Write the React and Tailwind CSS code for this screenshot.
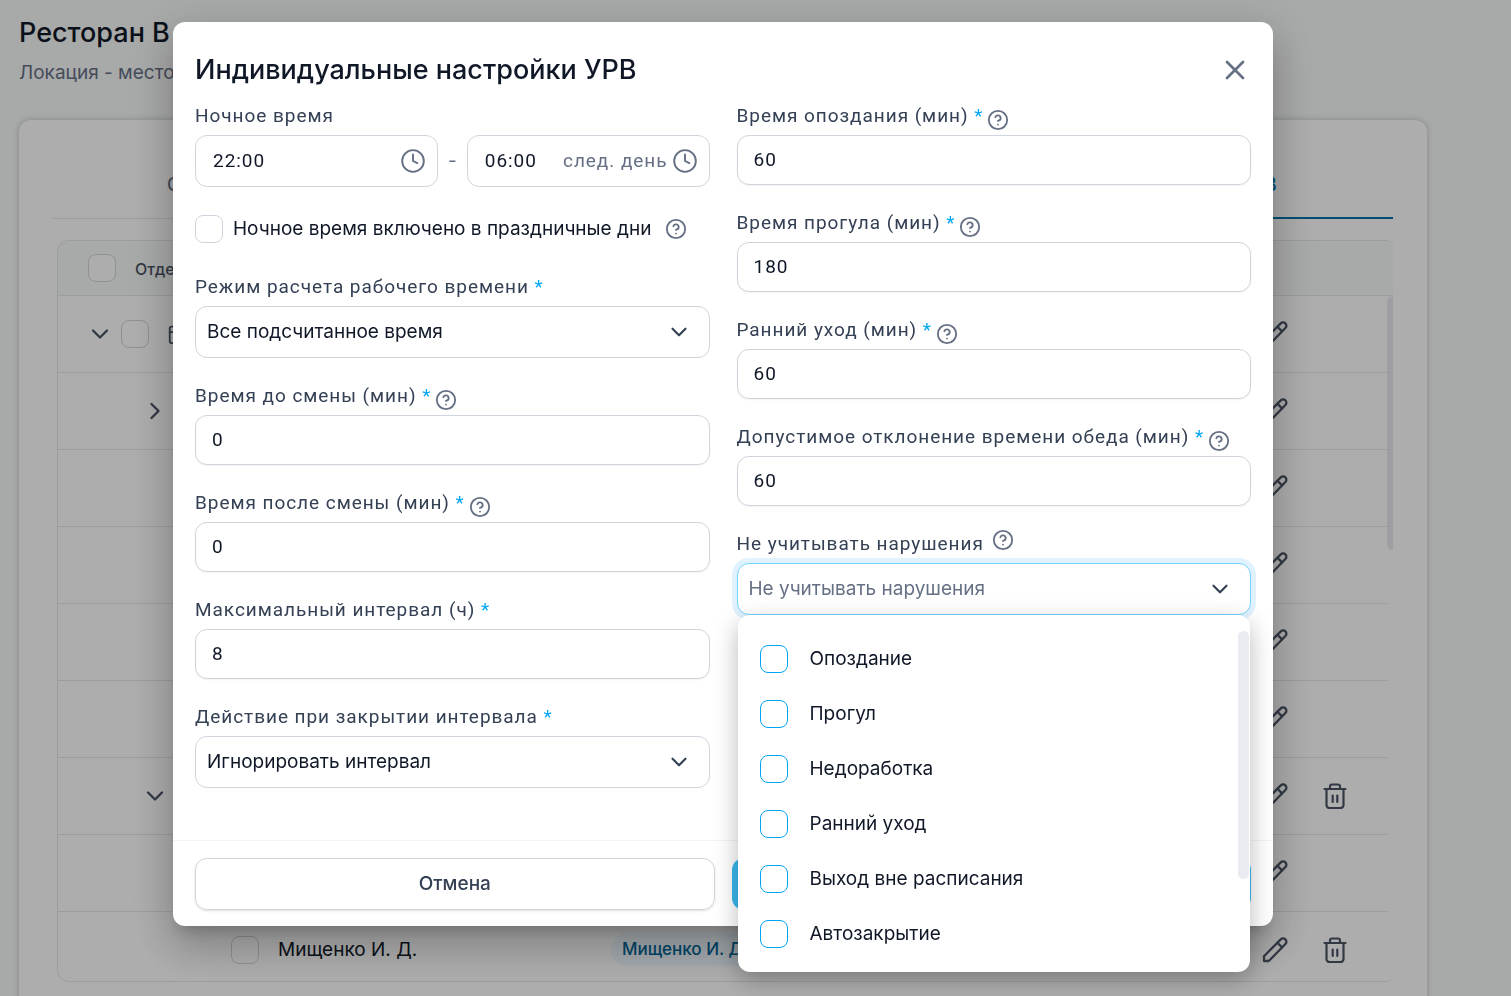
import React, { useState } from 'react';
import { ChevronDown, ChevronRight, CircleHelp, Clock, X, Calendar } from 'lucide-react';

const violations = ['Опоздание', 'Прогул', 'Недоработка', 'Ранний уход', 'Выход вне расписания', 'Автозакрытие'];

const rows = [
  { id: 1, toggle: 'root' },
  { id: 2, toggle: 'closed' },
  { id: 3 },
  { id: 4 },
  { id: 5 },
  { id: 6 },
  { id: 7, toggle: 'open', removable: true },
  { id: 8 },
  { id: 9, name: 'Мищенко И. Д.', removable: true },
];

const PencilIcon = () => (
  <svg width="26" height="26" viewBox="0 0 26 26" fill="none" stroke="currentColor" strokeWidth="2.3" strokeLinejoin="round" strokeLinecap="round">
    <path d="M2 24v-4.8L18.8 2.4a3.2 3.2 0 0 1 4.6 0a3.2 3.2 0 0 1 0 4.6L6.8 24Z" />
    <path d="m15.4 5.8 4.6 4.6" />
  </svg>
);

const TrashIcon = () => (
  <svg width="26" height="26" viewBox="0 0 26 26" fill="none" stroke="currentColor" strokeWidth="2.2" strokeLinejoin="round" strokeLinecap="round">
    <path d="M2.5 6h21" />
    <path d="M8 6V3.5A2 2 0 0 1 10 1.5h6a2 2 0 0 1 2 2V6" />
    <path d="M4.5 6v16a3 3 0 0 0 3 3h11a3 3 0 0 0 3-3V6" />
    <path d="M10.7 12.5v6.5M15.3 12.5v6.5" />
  </svg>
);

const Checkbox = ({ id, label, className = 'border-[#d0d5dd]' }) => (
  <input
    id={id}
    type="checkbox"
    aria-label={label}
    className={`size-7 shrink-0 appearance-none rounded-lg border bg-white checked:bg-sky-500 ${className}`}
  />
);

const Help = ({ className = '' }) => (
  <CircleHelp size={22} strokeWidth={2} className={`shrink-0 text-[#667085] ${className}`} />
);

const Label = ({ htmlFor, required, children, icon }) => (
  <div className="mb-1 flex h-[30px] items-center gap-1">
    <label htmlFor={htmlFor} className="font-[Roboto,sans-serif] text-[19px] tracking-wider text-[#344054]">
      {children}
      {required && <span className="text-sky-500"> *</span>}
    </label>
    {icon}
  </div>
);

const NumberField = ({ id, label, value, help }) => (
  <div>
    <Label htmlFor={id} required icon={help && <Help className="self-end" />}>{label}</Label>
    <input
      id={id}
      type="text"
      defaultValue={value}
      className="h-[50px] w-full rounded-xl border border-[#d0d5dd] bg-white px-4 pb-0.5 font-[Roboto,sans-serif] text-[19px] tracking-wider text-gray-900 shadow-xs outline-none"
    />
  </div>
);

const SelectBox = ({ id, value, className = 'border-[#d0d5dd] text-gray-900' }) => (
  <div className="relative">
    <select
      id={id}
      className={`h-[52px] w-full appearance-none rounded-xl border bg-white pr-12 pl-[11px] text-[19px] outline-none ${className}`}
    >
      <option>{value}</option>
    </select>
    <ChevronDown size={26} className="pointer-events-none absolute top-[13px] right-[18px] text-[#344054]" />
  </div>
);

const TimeField = ({ label, value, suffix }) => (
  <div className="flex h-[52px] min-w-0 flex-1 items-center rounded-xl border border-[#d0d5dd] pr-[11px] pl-[17px] font-[Roboto,sans-serif] text-[19px] tracking-wider">
    <input aria-label={label} type="text" defaultValue={value} className="w-0 min-w-0 flex-1 bg-transparent text-gray-900 outline-none" />
    {suffix && <span className="mr-1 whitespace-nowrap text-[#667085]">{suffix}</span>}
    <Clock size={26} strokeWidth={1.75} className="shrink-0 text-[#667085]" />
  </div>
);

const TreeCell = ({ row }) => {
  if (row.toggle === 'root') {
    return (
      <div className="flex items-center pl-7">
        <ChevronDown size={28} className="mr-[7px]" />
        <Checkbox label="Выбрать локацию" />
        <Calendar size={22} className="ml-[18px]" />
      </div>
    );
  }
  if (row.toggle) {
    const Chevron = row.toggle === 'open' ? ChevronDown : ChevronRight;
    return (
      <div className="pl-[83px]">
        <Chevron size={28} />
      </div>
    );
  }
  if (row.name) {
    return (
      <div className="flex items-center gap-[19px] pl-[173px]">
        <Checkbox label={row.name} />
        <span className="pt-0.5 text-[19px] text-gray-900">{row.name}</span>
      </div>
    );
  }
  return null;
};

const StaffTable = () => (
  <div className="relative ml-1 h-[calc(100vh-254px)] overflow-hidden rounded-l-xl rounded-r-md border border-r-0 border-gray-200">
    <table className="w-full table-fixed border-collapse text-left">
      <thead className="bg-[#f8faf9]">
        <tr className="h-[54px]">
          <th className="w-[553px] border-b border-gray-200 p-0">
            <div className="flex items-center gap-[19px] pl-[30px]">
              <Checkbox label="Выбрать все" />
              <span className="pt-0.5 text-base font-medium text-gray-600">Отде</span>
            </div>
          </th>
          <th className="border-b border-gray-200 p-0" />
          <th className="w-[146px] border-b border-gray-200 p-0" />
        </tr>
      </thead>
      <tbody className="text-gray-600">
        {rows.map((row) => (
          <tr key={row.id} className="h-[77px] border-b border-gray-200">
            <td className="p-0"><TreeCell row={row} /></td>
            <td className="p-0">
              {row.name && (
                <span className="inline-block rounded-full bg-sky-50 px-[11px] py-1 text-[17px] font-medium text-[#026597]">{row.name}</span>
              )}
            </td>
            <td className="p-0">
              <div className="flex gap-[34px] pl-[15px]">
                <button type="button" aria-label="Изменить"><PencilIcon /></button>
                {row.removable && <button type="button" aria-label="Удалить"><TrashIcon /></button>}
              </div>
            </td>
          </tr>
        ))}
      </tbody>
    </table>
    <div className="absolute top-[55px] right-0 h-full w-1.5 bg-white">
      <div className="h-[254px] rounded-l-md bg-[#e9ebf0]" />
    </div>
  </div>
);

const LocationPage = () => (
  <main className="h-screen overflow-hidden bg-[#f8faf9] pt-[13px] pr-[84px] pl-[19px]">
    <h1 className="text-[27px] leading-10 font-medium text-gray-900">Ресторан В</h1>
    <p className="mt-1.5 text-[19px] leading-7 text-[#667085]">Локация - место</p>
    <section className="mt-[33px] h-screen rounded-xl bg-white px-[34px] pt-8 shadow-[0_0_6px_rgba(30,30,80,0.25)]">
      <nav className="mb-[21px] flex border-b border-gray-200 text-lg font-medium">
        <a href="#main" className="flex h-[66px] flex-1 items-center pl-[114px] text-[#667085]">Основные</a>
        <a href="#urv" className="-mb-px flex h-[67px] w-[268px] items-center justify-center border-b-2 border-[#0273a8] text-[#0273a8]">УРВ</a>
      </nav>
      <StaffTable />
    </section>
  </main>
);

const ViolationsMenu = () => (
  <div className="absolute top-full right-px left-px rounded-xl bg-white pt-4 pb-[11px] shadow-[0_8px_24px_rgba(0,0,0,0.28)]">
    <ul>
      {violations.map((name, i) => (
        <li key={name} className="flex h-[55px] items-center gap-[22px] pl-[22px]">
          <Checkbox id={`violation-${i}`} className="border-sky-500" />
          <label htmlFor={`violation-${i}`} className="pt-0.5 text-[19px] text-gray-900">{name}</label>
        </li>
      ))}
    </ul>
    <div className="absolute top-4 right-px h-[248px] w-[11px] rounded-full bg-[#e9ebf0]" />
  </div>
);

/**
 * SettingsDialog
 *
 * Индивидуальные настройки учета рабочего времени (УРВ)
 */
const SettingsDialog = ({ onClose }) => (
  <div className="fixed inset-0 flex items-start justify-center bg-black/32 pt-[22px] pr-[65px]">
    <form
      role="dialog"
      aria-label="Индивидуальные настройки УРВ"
      className="w-full max-w-[1100px] rounded-xl bg-white shadow-[0_11px_15px_-7px_rgba(0,0,0,0.2),0_24px_38px_3px_rgba(0,0,0,0.14),0_9px_46px_8px_rgba(0,0,0,0.12)]"
    >
      <header className="flex items-center justify-between px-[22px] pt-8 pb-[15px]">
        <h2 className="text-[27px] leading-8 font-medium text-gray-900">Индивидуальные настройки УРВ</h2>
        <button type="button" aria-label="Закрыть" onClick={onClose} className="text-[#667085]">
          <X size={32} strokeWidth={2} />
        </button>
      </header>

      <div className="grid grid-cols-2 gap-[27px] px-[22px] pb-[52px]">
        <div className="flex flex-col gap-[23px]">
          <div>
            <Label>Ночное время</Label>
            <div className="flex items-center">
              <TimeField label="Начало ночного времени" value="22:00" />
              <span className="w-[29px] text-center text-[19px] text-[#667085]">-</span>
              <TimeField label="Конец ночного времени" value="06:00" suffix="след. день" />
            </div>
          </div>
          <div className="flex h-[39px] items-center pb-0.5">
            <Checkbox id="holidays" />
            <label htmlFor="holidays" className="mr-3.5 ml-2.5 pt-0.5 text-[19px] text-gray-900">Ночное время включено в праздничные дни</label>
            <Help />
          </div>
          <div>
            <Label htmlFor="mode" required>Режим расчета рабочего времени</Label>
            <SelectBox id="mode" value="Все подсчитанное время" />
          </div>
          <NumberField id="before" label="Время до смены (мин)" value="0" help />
          <NumberField id="after" label="Время после смены (мин)" value="0" help />
          <NumberField id="interval" label="Максимальный интервал (ч)" value="8" />
          <div>
            <Label htmlFor="action" required>Действие при закрытии интервала</Label>
            <SelectBox id="action" value="Игнорировать интервал" />
          </div>
        </div>

        <div className="flex flex-col gap-[23px]">
          <NumberField id="late" label="Время опоздания (мин)" value="60" help />
          <NumberField id="absence" label="Время прогула (мин)" value="180" help />
          <NumberField id="early" label="Ранний уход (мин)" value="60" help />
          <NumberField id="lunch" label="Допустимое отклонение времени обеда (мин)" value="60" help />
          <div>
            <Label htmlFor="ignore" icon={<Help className="ml-1 self-start" />}>Не учитывать нарушения</Label>
            <div className="relative">
              <SelectBox id="ignore" value="Не учитывать нарушения" className="border-sky-300 text-[#667085] ring-5 ring-sky-100" />
              <ViolationsMenu />
            </div>
          </div>
        </div>
      </div>

      <footer className="grid grid-cols-2 gap-[17px] border-t border-gray-100 px-[22px] pt-[17px] pb-4 text-[19px] font-medium">
        <button type="button" onClick={onClose} className="h-[52px] rounded-xl border border-[#d0d5dd] text-[#344054] shadow-sm">Отмена</button>
        <button type="submit" aria-label="Сохранить" className="h-[52px] rounded-xl bg-[#3bb9f0]" />
      </footer>
    </form>
  </div>
);

const App = () => {
  const [open, setOpen] = useState(true);

  return (
    <div className="font-[Inter,sans-serif]">
      <LocationPage />
      {open && <SettingsDialog onClose={() => setOpen(false)} />}
    </div>
  );
};

export default App;
